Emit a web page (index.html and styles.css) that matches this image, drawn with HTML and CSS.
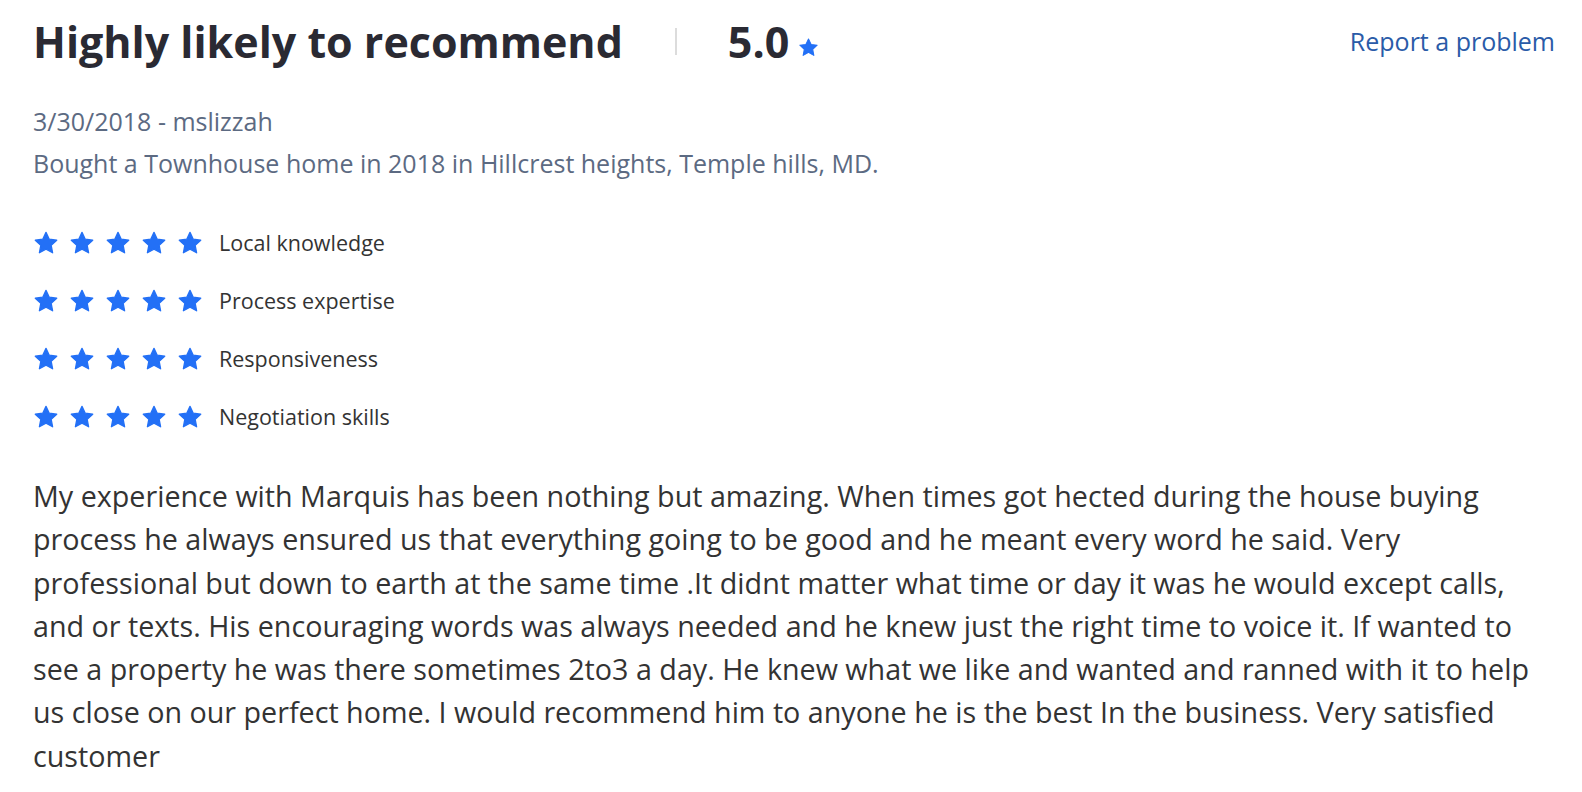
FILE: index.html
```html
<!DOCTYPE html>
<html lang="en">
<head>
    <meta charset="UTF-8">
    <meta name="viewport" content="width=device-width, initial-scale=1.0">
    <title>Review</title>
    <link rel="stylesheet" href="styles.css">
</head>
<body>
    <div class="review">
        <div class="review-header">
            <h1 class="review-title">Highly likely to recommend</h1>
            <span class="divider"></span>
            <div class="overall">
                <span class="overall-score">5.0</span>
                <svg class="star small" viewBox="0 0 24 24"><path d="M12 2.2l3 6.3 6.9.9-5.1 4.8 1.3 6.8L12 17.6l-6.1 3.4 1.3-6.8-5.1-4.8 6.9-.9z"/></svg>
            </div>
            <a class="report" href="#">Report a problem</a>
        </div>

        <div class="meta">3/30/2018 - mslizzah</div>
        <div class="meta">Bought a Townhouse home in 2018 in Hillcrest heights, Temple hills, MD.</div>

        <div class="ratings">
            <div class="rating-row">
                <div class="stars">
                    <svg class="star" viewBox="0 0 24 24"><path d="M12 2.2l3 6.3 6.9.9-5.1 4.8 1.3 6.8L12 17.6l-6.1 3.4 1.3-6.8-5.1-4.8 6.9-.9z"/></svg>
                    <svg class="star" viewBox="0 0 24 24"><path d="M12 2.2l3 6.3 6.9.9-5.1 4.8 1.3 6.8L12 17.6l-6.1 3.4 1.3-6.8-5.1-4.8 6.9-.9z"/></svg>
                    <svg class="star" viewBox="0 0 24 24"><path d="M12 2.2l3 6.3 6.9.9-5.1 4.8 1.3 6.8L12 17.6l-6.1 3.4 1.3-6.8-5.1-4.8 6.9-.9z"/></svg>
                    <svg class="star" viewBox="0 0 24 24"><path d="M12 2.2l3 6.3 6.9.9-5.1 4.8 1.3 6.8L12 17.6l-6.1 3.4 1.3-6.8-5.1-4.8 6.9-.9z"/></svg>
                    <svg class="star" viewBox="0 0 24 24"><path d="M12 2.2l3 6.3 6.9.9-5.1 4.8 1.3 6.8L12 17.6l-6.1 3.4 1.3-6.8-5.1-4.8 6.9-.9z"/></svg>
                </div>
                <span class="rating-label">Local knowledge</span>
            </div>
            <div class="rating-row">
                <div class="stars">
                    <svg class="star" viewBox="0 0 24 24"><path d="M12 2.2l3 6.3 6.9.9-5.1 4.8 1.3 6.8L12 17.6l-6.1 3.4 1.3-6.8-5.1-4.8 6.9-.9z"/></svg>
                    <svg class="star" viewBox="0 0 24 24"><path d="M12 2.2l3 6.3 6.9.9-5.1 4.8 1.3 6.8L12 17.6l-6.1 3.4 1.3-6.8-5.1-4.8 6.9-.9z"/></svg>
                    <svg class="star" viewBox="0 0 24 24"><path d="M12 2.2l3 6.3 6.9.9-5.1 4.8 1.3 6.8L12 17.6l-6.1 3.4 1.3-6.8-5.1-4.8 6.9-.9z"/></svg>
                    <svg class="star" viewBox="0 0 24 24"><path d="M12 2.2l3 6.3 6.9.9-5.1 4.8 1.3 6.8L12 17.6l-6.1 3.4 1.3-6.8-5.1-4.8 6.9-.9z"/></svg>
                    <svg class="star" viewBox="0 0 24 24"><path d="M12 2.2l3 6.3 6.9.9-5.1 4.8 1.3 6.8L12 17.6l-6.1 3.4 1.3-6.8-5.1-4.8 6.9-.9z"/></svg>
                </div>
                <span class="rating-label">Process expertise</span>
            </div>
            <div class="rating-row">
                <div class="stars">
                    <svg class="star" viewBox="0 0 24 24"><path d="M12 2.2l3 6.3 6.9.9-5.1 4.8 1.3 6.8L12 17.6l-6.1 3.4 1.3-6.8-5.1-4.8 6.9-.9z"/></svg>
                    <svg class="star" viewBox="0 0 24 24"><path d="M12 2.2l3 6.3 6.9.9-5.1 4.8 1.3 6.8L12 17.6l-6.1 3.4 1.3-6.8-5.1-4.8 6.9-.9z"/></svg>
                    <svg class="star" viewBox="0 0 24 24"><path d="M12 2.2l3 6.3 6.9.9-5.1 4.8 1.3 6.8L12 17.6l-6.1 3.4 1.3-6.8-5.1-4.8 6.9-.9z"/></svg>
                    <svg class="star" viewBox="0 0 24 24"><path d="M12 2.2l3 6.3 6.9.9-5.1 4.8 1.3 6.8L12 17.6l-6.1 3.4 1.3-6.8-5.1-4.8 6.9-.9z"/></svg>
                    <svg class="star" viewBox="0 0 24 24"><path d="M12 2.2l3 6.3 6.9.9-5.1 4.8 1.3 6.8L12 17.6l-6.1 3.4 1.3-6.8-5.1-4.8 6.9-.9z"/></svg>
                </div>
                <span class="rating-label">Responsiveness</span>
            </div>
            <div class="rating-row">
                <div class="stars">
                    <svg class="star" viewBox="0 0 24 24"><path d="M12 2.2l3 6.3 6.9.9-5.1 4.8 1.3 6.8L12 17.6l-6.1 3.4 1.3-6.8-5.1-4.8 6.9-.9z"/></svg>
                    <svg class="star" viewBox="0 0 24 24"><path d="M12 2.2l3 6.3 6.9.9-5.1 4.8 1.3 6.8L12 17.6l-6.1 3.4 1.3-6.8-5.1-4.8 6.9-.9z"/></svg>
                    <svg class="star" viewBox="0 0 24 24"><path d="M12 2.2l3 6.3 6.9.9-5.1 4.8 1.3 6.8L12 17.6l-6.1 3.4 1.3-6.8-5.1-4.8 6.9-.9z"/></svg>
                    <svg class="star" viewBox="0 0 24 24"><path d="M12 2.2l3 6.3 6.9.9-5.1 4.8 1.3 6.8L12 17.6l-6.1 3.4 1.3-6.8-5.1-4.8 6.9-.9z"/></svg>
                    <svg class="star" viewBox="0 0 24 24"><path d="M12 2.2l3 6.3 6.9.9-5.1 4.8 1.3 6.8L12 17.6l-6.1 3.4 1.3-6.8-5.1-4.8 6.9-.9z"/></svg>
                </div>
                <span class="rating-label">Negotiation skills</span>
            </div>
        </div>

        <p class="review-body">My experience with Marquis has been nothing but amazing. When times got hected during the house buying process he always ensured us that everything going to be good and he meant every word he said. Very professional but down to earth at the same time .It didnt matter what time or day it was he would except calls, and or texts. His encouraging words was always needed and he knew just the right time to voice it. If wanted to see a property he was there sometimes 2to3 a day. He knew what we like and wanted and ranned with it to help us close on our perfect home. I would recommend him to anyone he is the best In the business. Very satisfied customer</p>
    </div>
</body>
</html>
```

FILE: styles.css
```css
body {
    margin: 0;
    padding: 0;
    background: #fff;
    font-family: "Open Sans", "Liberation Sans", sans-serif;
}

.review {
    padding: 12px 27px 0 33px;
}

.review-header {
    display: flex;
    align-items: center;
    height: 58px;
}

.review-title {
    margin: 0;
    font-size: 43px;
    font-weight: 700;
    color: #2a2a33;
}

.divider {
    width: 2px;
    height: 27px;
    background: #dcdcdc;
    margin: 0 51px 0 52px;
}

.overall {
    display: flex;
    align-items: center;
}

.overall-score {
    font-size: 43px;
    font-weight: 700;
    color: #2a2a33;
}

.star {
    width: 26px;
    height: 26px;
    fill: #2370f6;
    stroke: #2370f6;
    stroke-width: 1.2;
    stroke-linejoin: round;
}

.star.small {
    width: 21px;
    height: 21px;
    margin: 12px 0 0 9px;
}

.report {
    margin-left: auto;
    font-size: 25px;
    color: #2a5ba8;
    text-decoration: none;
}

.meta {
    font-size: 25px;
    color: #5c6a82;
    line-height: 42px;
}

.review-header + .meta {
    margin-top: 30px;
}

.ratings {
    margin-top: 45px;
    display: flex;
    flex-direction: column;
    gap: 31px;
}

.rating-row {
    display: flex;
    align-items: center;
    height: 27px;
}

.stars {
    display: flex;
    gap: 10px;
    margin-right: 16px;
}

.rating-label {
    font-size: 21.5px;
    color: #333;
}

.review-body {
    max-width: 1505px;
    margin: 44px 0 0;
    font-size: 28.7px;
    line-height: 43.3px;
    color: #333;
}
```
